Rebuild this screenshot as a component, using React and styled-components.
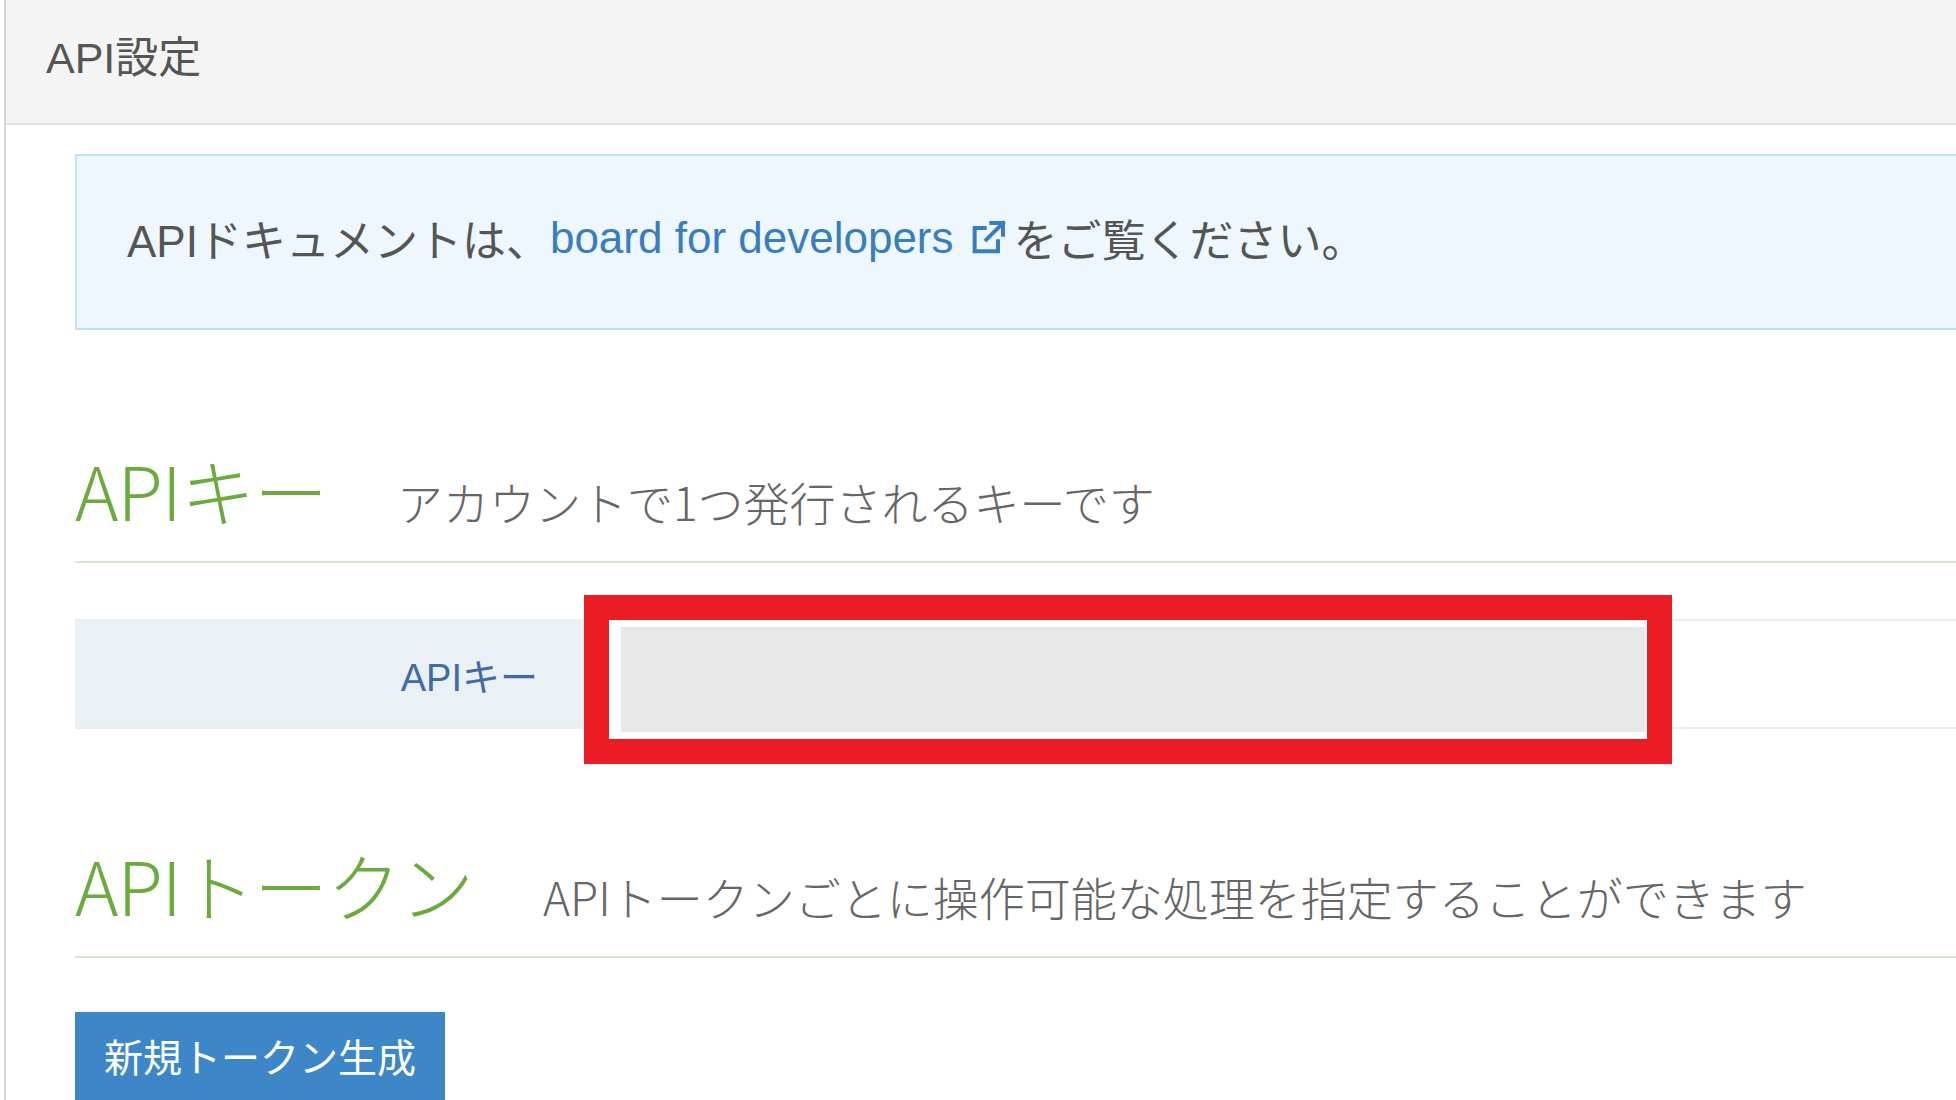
import React from "react";
import styled, { createGlobalStyle } from "styled-components";

const G = createGlobalStyle`
  html, body { margin: 0; padding: 0; background: #fff; }
  body { font-family: "Liberation Sans", "Noto Sans CJK JP", sans-serif; overflow: hidden; }
`;
const Page = styled.div`
  width: 1956px; height: 1100px; box-sizing: border-box;
  border-left: 2px solid #d6d6d6; margin-left: 4px; overflow: hidden;
`;
const Header = styled.div`
  height: 125px; box-sizing: border-box; background: #f4f4f4;
  border-bottom: 2px solid #e4e4e4; display: flex; align-items: center;
  padding: 0 0 16px 40px; font-size: 43px; color: #555; font-weight: 400;
`;
const Body = styled.div`
  padding: 29px 0 0 69px; display: flex; flex-direction: column;
`;
const Info = styled.div`
  height: 176px; box-sizing: border-box; background: #edf7fd;
  border: 2px solid #bfe4f1; border-right: none;
  display: flex; align-items: center; padding: 0 0 8px 50px;
  font-size: 44px; color: #555;
`;
const Link = styled.a`
  color: #3a7dbf; text-decoration: none; margin: 0 6px 0 0;
  display: inline-flex; align-items: center; gap: 14px;
`;
const SectionHead = styled.div`
  display: flex; align-items: baseline; gap: 70px;
  border-bottom: 2px solid #d6e9cd; padding-bottom: 27px;
  margin-top: ${p => p.$top}px;
`;
const H2 = styled.h2`
  margin: 0; font-family: "Noto Sans CJK JP", sans-serif;
  font-size: 74px; font-weight: 300; color: #6aab3e; line-height: 1.1;
  letter-spacing: -1px;
`;
const Sub = styled.span`
  font-family: "Noto Sans CJK JP", sans-serif;
  font-size: 46px; color: #666; font-weight: 300;
`;
const Row = styled.div`
  margin-top: 56px; height: 110px; display: flex; align-items: center;
  border-top: 2px solid #e6eef5; border-bottom: 2px solid #e6eef5; box-sizing: border-box;
`;
const Label = styled.div`
  width: 509px; height: 100%; background: #eaf0f4; box-sizing: border-box;
  display: flex; align-items: center; justify-content: flex-end; padding-right: 46px;
  font-size: 38px; color: #3d6ca6;
`;
const Frame = styled.div`
  width: 1088px; box-sizing: border-box; border: 25px solid #ec1c24;
  padding: 7px 2px 7px 12px; margin: -26px 0 -34px;
  background: #fff; position: relative; height: 169px; align-self: flex-start;
`;
const Field = styled.div`
  height: 100%; background: #e8e8e8;
`;
const Button = styled.button`
  margin-top: 54px; width: 370px; height: 90px; border: none; background: #3d87c8;
  color: #fff; font-family: inherit; font-size: 39px; text-align: center; padding: 0 0 4px;
`;

export default function App() {
  return (
    <Page>
      <G />
      <Header>API設定</Header>
      <Body>
        <Info>
          APIドキュメントは、
          <Link>
            board for developers
            <svg width="40" height="40" viewBox="0 0 24 24" fill="none" stroke="#3a7dbf" strokeWidth="2.4" strokeLinecap="square">
              <path d="M14 3h7v7M21 3l-10 10M18 14v6H4V6h6" />
            </svg>
          </Link>
          をご覧ください。
        </Info>
        <SectionHead $top={118}>
          <H2>APIキー</H2>
          <Sub>アカウントで1つ発行されるキーです</Sub>
        </SectionHead>
        <Row>
          <Label>APIキー</Label>
          <Frame><Field /></Frame>
        </Row>
        <SectionHead $top={114}>
          <H2>APIトークン</H2>
          <Sub>APIトークンごとに操作可能な処理を指定することができます</Sub>
        </SectionHead>
        <Button>新規トークン生成</Button>
      </Body>
    </Page>
  );
}
